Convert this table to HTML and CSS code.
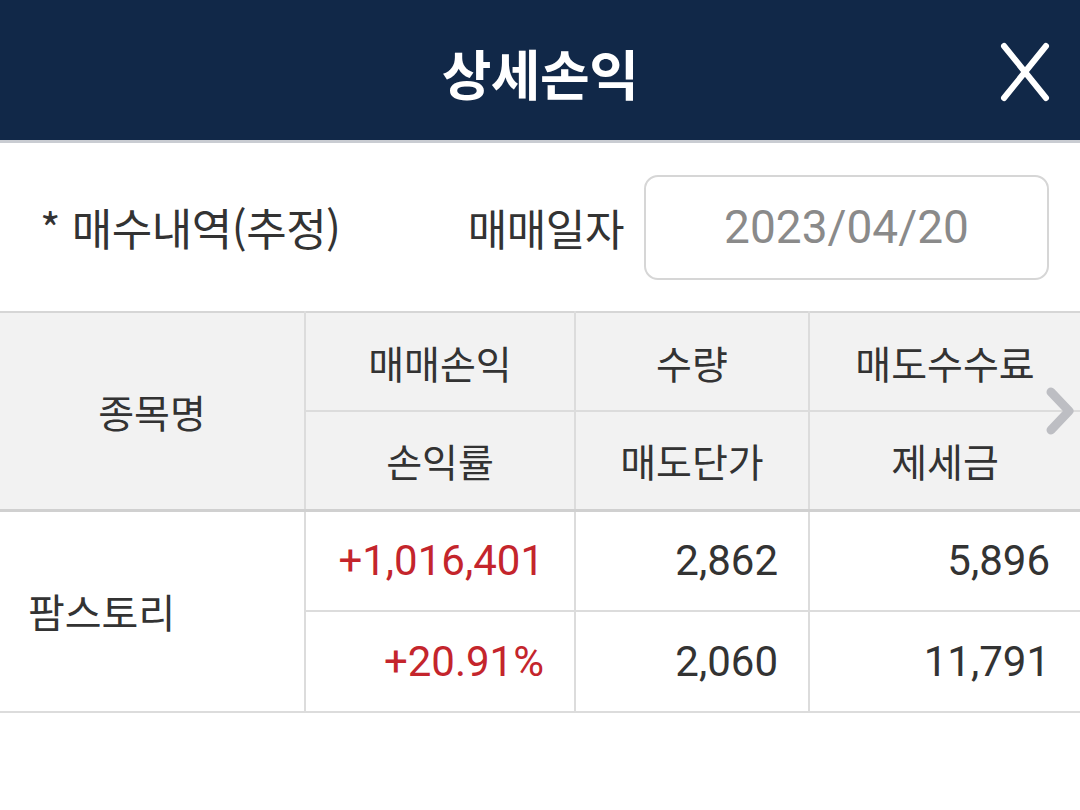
FILE: index.html
```html
<!DOCTYPE html>
<html lang="ko">
<head>
<meta charset="utf-8">
<link rel="stylesheet" href="styles.css">
</head>
<body>
<header class="topbar">
  <h1 class="title">상세손익</h1>
  <button class="close" aria-label="닫기">
    <svg width="50" height="60" viewBox="0 0 50 60"><path d="M4 4 L46 56 M46 4 L4 56" stroke="#fff" stroke-width="6" stroke-linecap="round" fill="none"/></svg>
  </button>
</header>
<section class="filter">
  <span class="note">* 매수내역(추정)</span>
  <span class="label">매매일자</span>
  <div class="date">2023/04/20</div>
</section>
<div class="tablewrap">
  <table class="grid">
    <colgroup>
      <col class="c1"><col class="c2"><col class="c3"><col class="c4">
    </colgroup>
    <thead>
      <tr><th rowspan="2" class="name">종목명</th><th>매매손익</th><th>수량</th><th>매도수수료</th></tr>
      <tr><th>손익률</th><th>매도단가</th><th>제세금</th></tr>
    </thead>
    <tbody>
      <tr><td rowspan="2" class="name">팜스토리</td><td class="num red">+1,016,401</td><td class="num">2,862</td><td class="num">5,896</td></tr>
      <tr><td class="num red">+20.91%</td><td class="num">2,060</td><td class="num">11,791</td></tr>
    </tbody>
  </table>
  <svg class="chev" width="34" height="50" viewBox="0 0 34 50"><path d="M8 6 L26 25 L8 44" stroke="#bdbec3" stroke-width="9" stroke-linecap="round" stroke-linejoin="round" fill="none"/></svg>
</div>
</body>
</html>
```
FILE: styles.css
```css
* { box-sizing: border-box; }
html, body { margin: 0; padding: 0; background: #fff; }
body {
  width: 1080px; height: 810px; overflow: hidden;
  font-family: "Noto Sans CJK KR", "Noto Sans", sans-serif;
  color: #333;
}
.topbar {
  height: 143px;
  background: #112848;
  border-bottom: 3px solid #c9ccd2;
  display: flex; align-items: center; justify-content: center;
  position: relative;
  padding-top: 6px;
}
.title {
  margin: 0; color: #fff; font-size: 54px; font-weight: 700;
  letter-spacing: -0.5px;
  line-height: 1;
}
.close {
  position: absolute; right: 30px; top: 42px;
  background: none; border: 0; padding: 0; width: 50px; height: 60px;
}
.filter {
  height: 168px;
  display: flex; align-items: center;
  padding: 0 31px 0 40px;
}
.note { font-size: 44px; color: #333; letter-spacing: -0.5px; }
.label { font-size: 43px; color: #333; margin-left: auto; margin-right: 20px; letter-spacing: -0.5px; }
.date {
  width: 405px; height: 105px;
  border: 2px solid #d6d6d6; border-radius: 14px;
  display: flex; align-items: center; justify-content: center;
  font-family: Roboto, "Noto Sans", sans-serif;
  font-size: 46px; color: #8a8a8a;
}
.tablewrap { position: relative; }
.grid {
  width: 1080px; border-collapse: collapse; table-layout: fixed;
}
.c1 { width: 305px; } .c2 { width: 270px; } .c3 { width: 234px; } .c4 { width: 271px; }
.grid th, .grid td {
  border: 2px solid #dcdcdc; height: 99px; padding: 0;
}
.grid tbody td { height: 101px; }
.grid tr > :first-child { border-left: 0; }
.grid tr > :last-child { border-right: 0; }
.grid th {
  background: #f2f2f2; font-weight: 400; font-size: 39px; color: #333;
  text-align: center; letter-spacing: 0;
}
.grid thead tr:first-child th { border-top: 2px solid #d6d6d6; }
.grid thead tr:last-child th, .grid thead .name { border-bottom: 3px solid #d0d0d0; }
.grid td.name { font-size: 40px; text-align: left; padding-left: 28px; letter-spacing: 0; }
.grid td.num {
  text-align: right; padding-right: 30px;
  font-family: Roboto, "Noto Sans", sans-serif; font-size: 42px; color: #333;
}
.grid td.red { color: #c4252c; }
.chev { position: absolute; right: 3px; top: 75px; }
```
